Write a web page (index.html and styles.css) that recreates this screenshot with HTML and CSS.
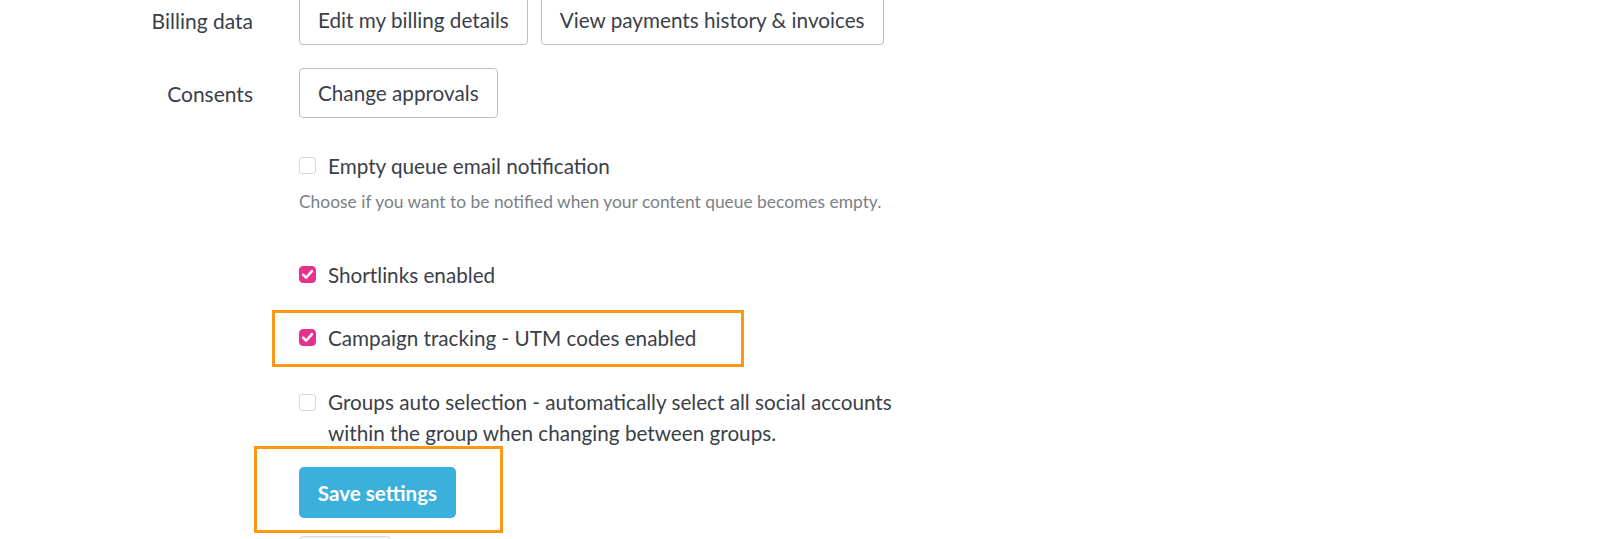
FILE: index.html
```html
<!DOCTYPE html>
<html>
<head>
<meta charset="utf-8">
<link rel="stylesheet" href="styles.css">
</head>
<body>
<div class="page">
  <div class="field-row first">
    <div class="field-label">Billing data</div>
    <div class="field-actions">
      <button class="btn">Edit my billing details</button>
      <button class="btn">View payments history &amp; invoices</button>
    </div>
  </div>
  <div class="field-row">
    <div class="field-label">Consents</div>
    <div class="field-actions">
      <button class="btn">Change approvals</button>
    </div>
  </div>

  <div class="options">
    <div class="option opt-empty">
      <span class="check"></span>
      <span class="option-text">Empty queue email notification</span>
    </div>
    <p class="hint">Choose if you want to be notified when your content queue becomes empty.</p>

    <div class="option opt-short">
      <span class="check checked"><svg viewBox="0 0 18 18" width="17" height="17"><path d="M4.3 9.2 L7.5 12.4 L13.7 5.4" fill="none" stroke="#fff" stroke-width="2.6" stroke-linecap="round" stroke-linejoin="round"/></svg></span>
      <span class="option-text">Shortlinks enabled</span>
    </div>

    <div class="option opt-campaign highlight">
      <span class="check checked"><svg viewBox="0 0 18 18" width="17" height="17"><path d="M4.3 9.2 L7.5 12.4 L13.7 5.4" fill="none" stroke="#fff" stroke-width="2.6" stroke-linecap="round" stroke-linejoin="round"/></svg></span>
      <span class="option-text">Campaign tracking - UTM codes enabled</span>
    </div>

    <div class="option opt-groups">
      <span class="check"></span>
      <span class="option-text">Groups auto selection - automatically select all social accounts<br>within the group when changing between groups.</span>
    </div>

    <div class="save-wrap highlight-save">
      <button class="btn-primary">Save settings</button>
    </div>
    <div class="btn-next"></div>
  </div>
</div>
</body>
</html>
```

FILE: styles.css
```css
*, *::before, *::after { box-sizing: border-box; }
html, body {
  margin: 0;
  padding: 0;
  background: #ffffff;
  overflow: hidden;
}
body {
  font-family: Lato, "Open Sans", sans-serif;
  color: #3a4049;
  width: 1600px;
  height: 539px;
}
.field-row {
  display: flex;
  align-items: center;
  gap: 46px;
  margin-bottom: 23px;
}
.field-row.first {
  margin-top: -5px;
}
.field-label {
  width: 253px;
  text-align: right;
  font-size: 21px;
}
.field-actions {
  display: flex;
  gap: 13px;
}
.btn {
  font-family: Lato, "Open Sans", sans-serif;
  font-size: 20.7px;
  color: #3a4049;
  background: #fff;
  border: 1px solid #b9bec6;
  border-radius: 4px;
  height: 50px;
  padding: 0 18px;
  line-height: 48px;
}
.options {
  padding-left: 299px;
  padding-top: 10px;
}
.option {
  display: flex;
  align-items: flex-start;
  gap: 12px;
  font-size: 20.7px;
  line-height: 30px;
}
.check {
  flex: none;
  width: 17px;
  height: 17px;
  margin-top: 6px;
  border: 1px solid #d3d6db;
  border-radius: 3px;
  background: #fff;
  display: flex;
  align-items: center;
  justify-content: center;
}
.check.checked {
  background: #e6318f;
  border-color: #e6318f;
  border-radius: 4px;
}
.check svg { display: block; flex: none; }
.hint {
  margin: 8px 0 0 0;
  font-size: 17.4px;
  line-height: 26px;
  color: #7b7f85;
}
.opt-short { margin-top: 45px; }
.opt-campaign { margin-top: 33px; }
.opt-groups { margin-top: 34px; line-height: 31px; }
.opt-groups .check { margin-top: 7px; }
.highlight, .highlight-save { position: relative; }
.highlight::before {
  content: "";
  position: absolute;
  left: -27px;
  top: -13px;
  width: 472px;
  height: 57px;
  border: 3px solid #fd9813;
  pointer-events: none;
}
.save-wrap {
  padding-top: 18px;
}
.highlight-save::before {
  content: "";
  position: absolute;
  left: -45px;
  top: -3px;
  width: 249px;
  height: 87px;
  border: 3px solid #fd9813;
  pointer-events: none;
}
.btn-primary {
  font-family: Lato, "Open Sans", sans-serif;
  font-size: 20.6px;
  font-weight: 700;
  color: #fff;
  background: #3cb0dc;
  border: none;
  border-radius: 5px;
  width: 157px;
  height: 51px;
  padding: 0;
  display: block;
}
.btn-next {
  margin-top: 18px;
  width: 92px;
  height: 50px;
  background: #f5f6f7;
  border: 1px solid #d6d9de;
  border-radius: 4px;
}
```
